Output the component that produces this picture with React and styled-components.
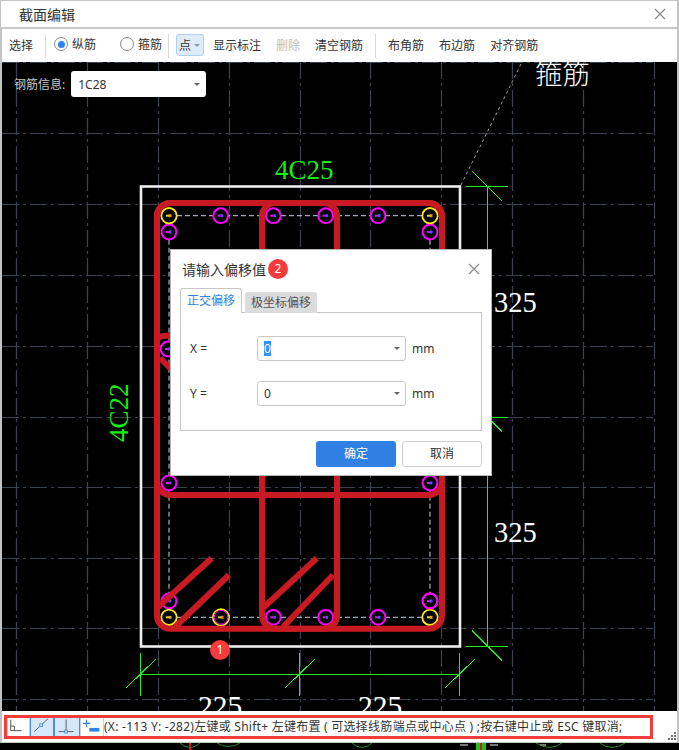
import React from "react";
import styled, { createGlobalStyle } from "styled-components";

const Global = createGlobalStyle`
  html, body { margin: 0; padding: 0; background: #000; }
  body { width: 679px; height: 750px; overflow: hidden; font-family: "Noto Sans", "Noto Sans CJK SC", sans-serif; }
  * { box-sizing: border-box; }
`;

const Page = styled.div`
  width: 679px;
  height: 750px;
  display: flex;
  flex-direction: column;
  background: #000;
`;
const Window = styled.div`
  flex: none;
  height: 743px;
  display: flex;
  flex-direction: column;
  background: #c8c8c8;
  border: solid #c4c4c4;
  border-width: 1px 2px 1px 2px;
`;
const TitleBar = styled.div`
  flex: none;
  height: 26px;
  margin-left: -1px;
  margin-bottom: 2px;
  padding: 0 11px 0 18px;
  display: flex;
  align-items: center;
  justify-content: space-between;
  background: #fff;
  color: #333;
  font-size: 14px;
`;
const Toolbar = styled.div`
  flex: none;
  height: 33px;
  display: flex;
  align-items: center;
  background: #fff;
  color: #333;
  font-size: 12px;
  padding-left: 7px;
`;
const ToolText = styled.span`
  margin-left: ${(p) => p.$gap || 0}px;
  color: ${(p) => (p.$disabled ? "#bcbcbc" : "#333")};
  line-height: 16px;
  white-space: nowrap;
`;
const Sep = styled.span`
  width: 1px;
  height: 24px;
  background: #d9d9d9;
  margin-left: ${(p) => p.$gap}px;
`;
const RadioLabel = styled.label`
  display: flex;
  align-items: center;
  gap: 4px;
  margin-left: ${(p) => p.$gap}px;
  margin-top: -3px;
`;
const RadioDot = styled.span`
  width: 14px;
  height: 14px;
  border-radius: 50%;
  border: 1px solid #8a8a8a;
  display: flex;
  align-items: center;
  justify-content: center;
  &::after {
    content: "";
    width: 7px;
    height: 7px;
    border-radius: 50%;
    background: ${(p) => (p.$on ? "#2f84f0" : "transparent")};
  }
`;
const PointButton = styled.div`
  width: 28px;
  height: 22px;
  margin-left: 7px;
  margin-top: -1px;
  padding-left: 2px;
  display: flex;
  align-items: center;
  gap: 3px;
  border: 1px solid #b3cfee;
  border-radius: 3px;
  background: #deebf9;
  color: #333;
`;
const Caret = styled.span`
  width: 0;
  height: 0;
  border: 3px solid transparent;
  border-top: 3px solid ${(p) => p.$c || "#777"};
  border-bottom: 0;
  flex: none;
`;
const Canvas = styled.div`
  flex: 1;
  position: relative;
  overflow: hidden;
  background: #000;
  min-height: 0;
`;
const Drawing = styled.svg`
  display: block;
  width: 675px;
  height: 649px;
`;
const InfoBar = styled.div`
  position: absolute;
  left: 12px;
  top: 9px;
  display: flex;
  align-items: center;
  gap: 6px;
  color: #c9c9c9;
  font-size: 12px;
`;
const InfoSelect = styled.div`
  width: 135px;
  height: 26px;
  padding: 0 6px 0 7px;
  display: flex;
  align-items: center;
  justify-content: space-between;
  background: #fff;
  border-radius: 3px;
  color: #333;
`;
const Badge = styled.span`
  width: 20px;
  height: 20px;
  border-radius: 50%;
  background: #f53b3b;
  color: #fff;
  font-size: 12px;
  line-height: 20px;
  text-align: center;
  flex: none;
`;
const FloatingBadge = styled(Badge)`
  position: absolute;
  left: 208px;
  top: 578px;
`;
const Dialog = styled.div`
  position: absolute;
  left: 168px;
  top: 187px;
  width: 322px;
  height: 227px;
  padding: 0 9px 0 9px;
  display: flex;
  flex-direction: column;
  background: #fff;
  border: 1px solid #b9b9b9;
  color: #333;
  font-size: 12px;
`;
const DialogHead = styled.div`
  flex: none;
  height: 38px;
  display: flex;
  align-items: center;
  gap: 2px;
  font-size: 14px;
  padding-left: 2px;
`;
const CloseBtn = styled.svg`
  flex: none;
  width: 12px;
  height: 12px;
  margin-left: ${(p) => (p.$auto ? "auto" : 0)};
  margin-right: ${(p) => p.$right || 0}px;
`;
const Tabs = styled.div`
  flex: none;
  height: 25px;
  display: flex;
  align-items: flex-end;
  gap: 3px;
  margin-bottom: -1px;
  position: relative;
  z-index: 1;
`;
const ActiveTab = styled.div`
  width: 62px;
  height: 25px;
  text-align: center;
  line-height: 24px;
  color: #2f84e6;
  background: #fff;
  border: 1px solid #c6c6c6;
  border-bottom: 0;
  border-radius: 3px 3px 0 0;
`;
const IdleTab = styled.div`
  width: 72px;
  height: 21px;
  text-align: center;
  line-height: 21px;
  color: #555;
  background: #dcdcdc;
  border-radius: 3px 3px 0 0;
`;
const Panel = styled.div`
  flex: none;
  height: 119px;
  padding-top: 23px;
  display: flex;
  flex-direction: column;
  gap: 21px;
  border: 1px solid #c6c6c6;
  width: 302px;
`;
const Row = styled.div`
  display: flex;
  align-items: center;
  height: 24px;
  padding-left: 9px;
`;
const RowLabel = styled.span`
  width: 67px;
  flex: none;
`;
const OffsetSelect = styled.div`
  width: 149px;
  height: 25px;
  padding: 0 5px 0 6px;
  display: flex;
  align-items: center;
  justify-content: space-between;
  border: 1px solid #c8c8c8;
  border-radius: 3px;
  font-size: 12px;
`;
const Value = styled.span`
  display: block;
  width: 7px;
  height: 15px;
  line-height: 15px;
  text-align: center;
  background: ${(p) => (p.$selected ? "#3390ff" : "transparent")};
  color: ${(p) => (p.$selected ? "#fff" : "#333")};
`;
const Unit = styled.span`
  margin-left: 6px;
`;
const Actions = styled.div`
  flex: 1;
  display: flex;
  justify-content: flex-end;
  align-items: center;
  gap: 6px;
  width: 302px;
  padding-top: 1px;
`;
const PrimaryBtn = styled.div`
  width: 80px;
  height: 26px;
  line-height: 26px;
  text-align: center;
  background: #2f80e2;
  color: #fff;
  border-radius: 3px;
`;
const GhostBtn = styled.div`
  width: 80px;
  height: 26px;
  line-height: 24px;
  text-align: center;
  background: #fff;
  color: #333;
  border: 1px solid #cfcfcf;
  border-radius: 3px;
`;
const StatusBar = styled.div`
  flex: none;
  height: 31px;
  padding: 4px 0 0 2px;
  position: relative;
  background: #fff;
`;
const StatusBox = styled.div`
  width: 649px;
  height: 24px;
  display: flex;
  align-items: stretch;
  border: 3px solid #f23b3b;
  color: #333;
  font-size: 12px;
`;
const ModeButton = styled.div`
  width: ${(p) => p.$w}px;
  flex: none;
  background: ${(p) => (p.$on ? "#d6e6fb" : "#fff")};
  border-left: 1px solid ${(p) => (p.$on ? "#4a90e2" : "#cfcfcf")};
  border-right: 1px solid ${(p) => (p.$on ? "#4a90e2" : "#cfcfcf")};
  svg { display: block; width: 100%; height: 100%; }
`;
const StatusText = styled.span`
  line-height: 18px;
  white-space: nowrap;
  letter-spacing: 0.26px;
`;
const Grip = styled.svg`
  position: absolute;
  right: 1px;
  bottom: 2px;
  width: 9px;
  height: 8px;
`;
const BackStrip = styled.svg`
  display: block;
  flex: none;
  width: 679px;
  height: 7px;
`;

const gridX = [16, 87, 158, 229, 300, 370, 441, 512, 583, 654];
const gridY = [62, 133, 204, 275, 346, 417, 487, 558, 628, 699];
const magenta = [[220.7, 215.7], [273.3, 215.7], [325.7, 215.7], [378, 215.7], [169, 232], [430, 232], [168, 349], [169, 483], [430, 483], [169, 601], [430, 601], [273.3, 617.3], [325.7, 617.3], [378, 617.3]];
const yellow = [[169, 215.7], [430, 215.7], [169, 617.3], [430, 617.3]];
const hooks = [[211.7, 558.3, 158, 607], [229, 575, 175, 627], [316.7, 558.3, 263, 608], [333, 575, 283, 627], [160, 358, 171, 369]];
const verticalTicks = [186.5, 417, 646];
const horizontalTicks = [140.5, 299.5, 459.5];

function Mark({ x, y, c, d }) {
  return (
    <g>
      <rect x={x - 3} y={y - 1} width="3" height="2" fill={c} />
      <rect x={x} y={y - 1.5} width="2.5" height="3" fill={d} />
    </g>
  );
}

function SectionDrawing() {
  return (
    <Drawing viewBox="2 62 675 649">
      <rect x="2" y="62" width="675" height="649" fill="#000" />
      <g stroke="#3c4350" strokeWidth="1.2" strokeDasharray="17 4 3 4" fill="none">
        {gridX.map((x) => <line key={x} x1={x + 0.5} y1="62" x2={x + 0.5} y2="711" />)}
        {gridY.map((y) => <line key={y} x1="2" y1={y + 0.5} x2="653" y2={y + 0.5} />)}
      </g>
      <line x1="461" y1="185" x2="522" y2="62" stroke="#9a9a9a" strokeWidth="1" strokeDasharray="3 3" />
      <rect x="141" y="186.5" width="319" height="460" fill="none" stroke="#eeeeee" strokeWidth="2.6" />
      <g fill="none" stroke="#c9d4ea" strokeWidth="1" strokeDasharray="5 3">
        <path d="M169 215.7H430M169 617.3H430M169 215.7V617.3M430 215.7V617.3" />
      </g>
      {magenta.map(([x, y]) => (
        <g key={`${x}-${y}`}>
          <circle cx={x} cy={y} r="7.4" fill="#000" stroke="#ff00ff" strokeWidth="2" />
          <Mark x={x} y={y} c="#ff00ff" d="#3a5cff" />
        </g>
      ))}
      <circle cx="221" cy="617.3" r="8.2" fill="#000" stroke="#ffe81a" strokeWidth="1.6" />
      <circle cx="221" cy="617.3" r="6.9" fill="none" stroke="#ff00ff" strokeWidth="1" />
      <Mark x={221} y={617.3} c="#d8c820" d="#ff7a2a" />
      {yellow.map(([x, y]) => (
        <g key={`y${x}-${y}`}>
          <circle cx={x} cy={y} r="7.7" fill="#000" stroke="#ffe81a" strokeWidth="1.8" />
          <Mark x={x} y={y} c="#e8d820" d="#e8a020" />
        </g>
      ))}
      <g fill="none" stroke="#c81a22" strokeWidth="6">
        <rect x="157" y="203" width="285" height="425.7" rx="13" />
        <rect x="157" y="203" width="285" height="292" rx="13" />
        <rect x="262" y="203" width="75" height="425.7" rx="13" />
        {hooks.map(([a, b, c, d]) => <line key={a} x1={a} y1={b} x2={c} y2={d} />)}
        <path d="M159 337Q166 335 171 336" />
      </g>
      <circle cx="430" cy="601" r="7.4" fill="none" stroke="#ff00ff" strokeWidth="2" />
      <g fill="none" stroke="#22ee22" strokeWidth="1" shapeRendering="crispEdges">
        <path d="M487.5 186V647" />
        <path d="M140 674.5H460" />
        {verticalTicks.map((y) => (
          <g key={y}>
            <path d={`M466 ${Math.floor(y) + 0.5}H508`} />
            <path d={`M472 ${y - 15.5}L502 ${y + 14.5}`} />
          </g>
        ))}
        {horizontalTicks.map((x) => (
          <g key={x}>
            <path d={`M${x} 653V696`} />
            <path d={`M${x + 15.5} 659L${x - 14.5} 688`} />
          </g>
        ))}
      </g>
      <g fontFamily="'Liberation Serif', serif">
        <text x="275" y="179" fontSize="27" fill="#14f014">4C25</text>
        <text x="0" y="0" fontSize="27" fill="#14f014" transform="translate(128 442) rotate(-90)">4C22</text>
        <text x="494" y="312" fontSize="28.5" fill="#fff">325</text>
        <text x="494" y="542" fontSize="28.5" fill="#fff">325</text>
        <text x="198" y="716" fontSize="29.5" fill="#fff">225</text>
        <text x="358" y="716" fontSize="29.5" fill="#fff">225</text>
      </g>
      <text x="535" y="84" fontSize="27.5" fill="#fff" fontWeight="300" fontFamily="'Noto Sans CJK SC', sans-serif">箍筋</text>
    </Drawing>
  );
}

const closeIcon = (
  <g stroke="#8c8c8c" strokeWidth="1.2" fill="none"><path d="M1 1L11 11M11 1L1 11" /></g>
);

function Field({ label, selected }) {
  return (
    <Row>
      <RowLabel>{label}</RowLabel>
      <OffsetSelect>
        <Value $selected={selected}>0</Value>
        <Caret $c="#666" />
      </OffsetSelect>
      <Unit>mm</Unit>
    </Row>
  );
}

export default function App() {
  return (
    <Page>
      <Global />
      <Window>
        <TitleBar>
          截面编辑
          <CloseBtn viewBox="0 0 12 12">{closeIcon}</CloseBtn>
        </TitleBar>
        <Toolbar>
          <ToolText>选择</ToolText>
          <Sep $gap={12} />
          <RadioLabel $gap={8}><RadioDot $on />纵筋</RadioLabel>
          <RadioLabel $gap={24}><RadioDot />箍筋</RadioLabel>
          <Sep $gap={6} />
          <PointButton>点<Caret $c="#8a9bb0" /></PointButton>
          <ToolText $gap={9}>显示标注</ToolText>
          <ToolText $gap={15} $disabled>删除</ToolText>
          <ToolText $gap={15}>清空钢筋</ToolText>
          <Sep $gap={12} />
          <ToolText $gap={12}>布角筋</ToolText>
          <ToolText $gap={15}>布边筋</ToolText>
          <ToolText $gap={15}>对齐钢筋</ToolText>
        </Toolbar>
        <Canvas>
          <SectionDrawing />
          <InfoBar>
            钢筋信息:
            <InfoSelect>1C28<Caret $c="#666" /></InfoSelect>
          </InfoBar>
          <FloatingBadge>1</FloatingBadge>
          <Dialog>
            <DialogHead>
              请输入偏移值
              <Badge>2</Badge>
              <CloseBtn viewBox="0 0 12 12" $auto $right={2}>{closeIcon}</CloseBtn>
            </DialogHead>
            <Tabs>
              <ActiveTab>正交偏移</ActiveTab>
              <IdleTab>极坐标偏移</IdleTab>
            </Tabs>
            <Panel>
              <Field label="X =" selected />
              <Field label="Y =" />
            </Panel>
            <Actions>
              <PrimaryBtn>确定</PrimaryBtn>
              <GhostBtn>取消</GhostBtn>
            </Actions>
          </Dialog>
        </Canvas>
        <StatusBar>
          <StatusBox>
            <ModeButton $w={23}>
              <svg viewBox="0 0 23 18">
                <path d="M3 1V13H15M3 8H7V13" fill="none" stroke="#444" strokeWidth="1" />
              </svg>
            </ModeButton>
            <ModeButton $w={24} $on>
              <svg viewBox="0 0 24 18">
                <path d="M3.5 14L18.5 0" fill="none" stroke="#555" strokeWidth="1" />
                <rect x="9.5" y="5.5" width="3" height="3" fill="#d6e6fb" stroke="#4a90e2" />
              </svg>
            </ModeButton>
            <ModeButton $w={26} $on>
              <svg viewBox="0 0 26 18">
                <path d="M4 14H20M12 1V14" fill="none" stroke="#555" strokeWidth="1" />
                <rect x="10.5" y="12.5" width="3" height="3" fill="#d6e6fb" stroke="#4a90e2" />
              </svg>
            </ModeButton>
            <ModeButton $w={24}>
              <svg viewBox="0 0 24 18">
                <path d="M6 1V9M2 5H10" stroke="#2f84e6" strokeWidth="1.4" fill="none" />
                <rect x="9" y="10" width="11" height="4" fill="#2f84e6" />
              </svg>
            </ModeButton>
            <StatusText>(X: -113 Y: -282)左键或 Shift+ 左键布置 ( 可选择线筋端点或中心点 ) ;按右键中止或 ESC 键取消;</StatusText>
          </StatusBox>
          <Grip viewBox="0 0 9 8">
            <path d="M7 0h2v2h-2zM4 3h2v2h-2zM7 3h2v2h-2zM1 6h2v2h-2zM4 6h2v2h-2zM7 6h2v2h-2z" fill="#777" />
          </Grip>
        </StatusBar>
      </Window>
      <BackStrip viewBox="0 743 679 7">
        <g fill="none" stroke="#1c8a1c" strokeWidth="1">
          <path d="M180 743Q190 752 200 743M217 743Q228 750 240 743M352 743Q362 752 372 743M536 743Q550 752 562 743M600 743Q612 752 625 743" />
        </g>
        <path d="M476 743h10v7h-10z" fill="#1fbf1f" />
        <path d="M189 743h2v7h-2zM480 743h2v7h-2z" fill="#c81a22" />
        <path d="M460 744h8v2h-8zM490 744h8v2h-8zM540 744h6v2h-6z" fill="#777" />
      </BackStrip>
    </Page>
  );
}
